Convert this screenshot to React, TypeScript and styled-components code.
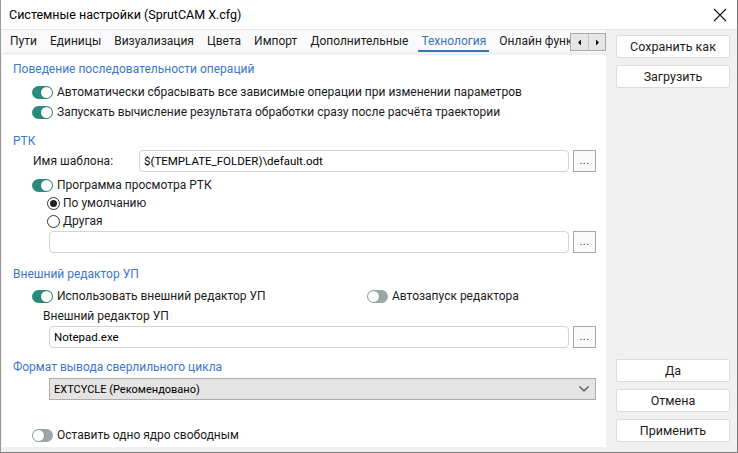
import React from "react";
import styled, { createGlobalStyle } from "styled-components";

const Global = createGlobalStyle`
  html, body { margin: 0; padding: 0; background: #ffffff; }
  body { font-family: Roboto, "Noto Sans", "Liberation Sans", sans-serif; font-size: 12px; color: #1b1b1b; }
  * { box-sizing: border-box; }
`;

const Window = styled.div`
  width: 738px;
  height: 453px;
  border-right: 1px solid #7c7c7c;
  border-bottom: 1px solid #7c7c7c;
  border-left: 1px solid #9a9a9a;
  display: flex;
  flex-direction: column;
  background: #f0f0f0;
  overflow: hidden;
`;

const TitleBar = styled.div`
  height: 30px;
  background: #ffffff;
  display: flex;
  align-items: center;
  justify-content: space-between;
  padding: 0 10px 0 8px;
  border-bottom: 1px solid #e6e6e6;
  font-size: 12.5px;
  color: #000;
`;

const CloseIcon = styled.svg`
  width: 14px;
  height: 14px;
`;

const Body = styled.div`
  flex: 1;
  display: flex;
`;

const LeftCol = styled.div`
  width: 605px;
  display: flex;
  flex-direction: column;
  padding-bottom: 5px;
`;

const TabStrip = styled.div`
  height: 22px;
  background: #fafafa;
  display: flex;
  align-items: stretch;
  overflow: hidden;
`;

const Tabs = styled.div`
  display: flex;
  width: 571px;
  overflow: hidden;
  padding-left: 6px;
`;

const Tab = styled.div<{ $active?: boolean }>`
  flex: none;
  padding: 2px 3px 0;
  margin-right: 7px;
  display: flex;
  align-items: center;
  white-space: nowrap;
  color: ${(p) => (p.$active ? "#3a73b8" : "#1b1b1b")};
  border-bottom: 2px solid ${(p) => (p.$active ? "#3a73b8" : "transparent")};
`;

const ScrollBtns = styled.div`
  display: flex;
  align-items: center;
  height: 18px;
  margin-top: 3px;
  border: 1px solid #a8a8a8;
  background: #e6e6e6;
`;

const ScrollBtn = styled.div<{ $left?: boolean }>`
  width: 17px;
  height: 16px;
  display: flex;
  align-items: center;
  justify-content: center;
  border-left: ${(p) => (p.$left ? "none" : "1px solid #c4c4c4")};
`;

const Panel = styled.div`
  margin-top: 3px;
  margin-left: 1px;
  flex: 1;
  background: #ffffff;
  display: flex;
  flex-direction: column;
  padding: 5px 10px 0 0;
`;

const Header = styled.div<{ $mt?: number }>`
  height: 18px;
  margin-top: ${(p) => p.$mt ?? 0}px;
  padding-left: 11px;
  display: flex;
  align-items: center;
  color: #3b78c8;
  white-space: nowrap;
`;

const Row = styled.div<{ $mt?: number; $indent: number; $h?: number }>`
  height: ${(p) => p.$h ?? 20}px;
  margin-top: ${(p) => p.$mt ?? 0}px;
  padding-left: ${(p) => p.$indent}px;
  display: flex;
  align-items: center;
  white-space: nowrap;
`;

const Track = styled.span<{ $on: boolean }>`
  flex: none;
  width: 21px;
  height: 13px;
  border-radius: 7px;
  background: ${(p) => (p.$on ? "#2b8a7c" : "#97a8a6")};
  position: relative;
  margin-right: 4px;
`;

const Knob = styled.span<{ $on: boolean }>`
  position: absolute;
  top: 1px;
  left: ${(p) => (p.$on ? "9px" : "1px")};
  width: 11px;
  height: 11px;
  border-radius: 50%;
  background: #ffffff;
  box-shadow: 0 0 0 0.5px rgba(0, 0, 0, 0.15);
`;

const Radio = styled.span<{ $on: boolean }>`
  flex: none;
  width: 13px;
  height: 13px;
  border-radius: 50%;
  border: 1px solid #333;
  background: #fff;
  display: flex;
  align-items: center;
  justify-content: center;
  margin-right: 3px;
  &::after {
    content: "";
    width: 7px;
    height: 7px;
    border-radius: 50%;
    background: ${(p) => (p.$on ? "#222" : "transparent")};
  }
`;

const Label = styled.span<{ $w?: number }>`
  flex: none;
  width: ${(p) => (p.$w ? `${p.$w}px` : "auto")};
`;

const Input = styled.div`
  flex: 1;
  height: 22px;
  border: 1px solid #d4d4d4;
  border-radius: 4px;
  background: #fff;
  display: flex;
  align-items: center;
  padding-left: 4px;
  font-size: 11.5px;
  color: #000;
`;

const DotsBtn = styled.div`
  flex: none;
  width: 23px;
  height: 22px;
  margin-left: 4px;
  border: 1px solid #a8a8a8;
  background: #fafafa;
  display: flex;
  align-items: center;
  justify-content: center;
  color: #2a2a8a;
  font-size: 11px;
  padding-bottom: 2px;
  letter-spacing: 0.5px;
`;

const Select = styled.div`
  flex: 1;
  height: 22px;
  border: 1px solid #adadad;
  background: #e4e4e4;
  display: flex;
  align-items: center;
  justify-content: space-between;
  padding: 0 6px 0 4px;
  font-size: 11px;
  color: #000;
`;

const Spacer = styled.div<{ $h: number }>`
  flex: none;
  height: ${(p) => p.$h}px;
`;

const RightCol = styled.div`
  flex: 1;
  display: flex;
  flex-direction: column;
  padding: 5px 7px 10px 10px;
  gap: 7px;
`;

const Btn = styled.div`
  height: 23px;
  border: 1px solid #dcdcdc;
  border-radius: 2px;
  background: #fff;
  display: flex;
  align-items: center;
  justify-content: center;
  color: #1b1b1b;
  font-size: 12.5px;
`;

const Fill = styled.div`
  flex: 1;
`;

const Toggle = ({ on }: { on: boolean }) => (
  <Track $on={on}>
    <Knob $on={on} />
  </Track>
);

const tabs = ["Пути", "Единицы", "Визуализация", "Цвета", "Импорт", "Дополнительные", "Технология", "Онлайн функции"];

export default function App() {
  return (
    <>
      <Global />
      <Window>
        <TitleBar>
          <span>Системные настройки (SprutCAM X.cfg)</span>
          <CloseIcon viewBox="0 0 14 14">
            <path d="M1 1 L13 13 M13 1 L1 13" stroke="#111" strokeWidth="1.1" fill="none" />
          </CloseIcon>
        </TitleBar>
        <Body>
          <LeftCol>
            <TabStrip>
              <Tabs>
                {tabs.map((t) => (
                  <Tab key={t} $active={t === "Технология"}>
                    {t}
                  </Tab>
                ))}
              </Tabs>
              <ScrollBtns>
                <ScrollBtn $left>
                  <svg width="6" height="7" viewBox="0 0 6 7">
                    <path d="M4 0.5 L1 3.5 L4 6.5 Z" fill="#111" />
                  </svg>
                </ScrollBtn>
                <ScrollBtn>
                  <svg width="6" height="7" viewBox="0 0 6 7">
                    <path d="M2 0.5 L5 3.5 L2 6.5 Z" fill="#111" />
                  </svg>
                </ScrollBtn>
              </ScrollBtns>
            </TabStrip>
            <Panel>
              <Header>Поведение последовательности операций</Header>
              <Row $indent={30} $mt={4}>
                <Toggle on />
                Автоматически сбрасывать все зависимые операции при изменении параметров
              </Row>
              <Row $indent={30}>
                <Toggle on />
                Запускать вычисление результата обработки сразу после расчёта траектории
              </Row>
              <Header $mt={10}>РТК</Header>
              <Row $indent={31} $h={22}>
                <Label $w={106}>Имя шаблона:</Label>
                <Input>$(TEMPLATE_FOLDER)\default.odt</Input>
                <DotsBtn>...</DotsBtn>
              </Row>
              <Row $indent={30} $mt={4} $h={18}>
                <Toggle on />
                Программа просмотра РТК
              </Row>
              <Row $indent={45} $h={18}>
                <Radio $on />
                По умолчанию
              </Row>
              <Row $indent={45} $h={18}>
                <Radio $on={false} />
                Другая
              </Row>
              <Row $indent={47} $h={22} $mt={1}>
                <Input />
                <DotsBtn>...</DotsBtn>
              </Row>
              <Header $mt={12}>Внешний редактор УП</Header>
              <Row $indent={30} $mt={3}>
                <Label $w={335}>
                  <Row $indent={0} $h={20}>
                    <Toggle on />
                    Использовать внешний редактор УП
                  </Row>
                </Label>
                <Toggle on={false} />
                Автозапуск редактора
              </Row>
              <Row $indent={41} $h={20}>
                Внешний редактор УП
              </Row>
              <Row $indent={47} $h={22}>
                <Input>Notepad.exe</Input>
                <DotsBtn>...</DotsBtn>
              </Row>
              <Header $mt={10}>Формат вывода сверлильного цикла</Header>
              <Row $indent={47} $h={22} $mt={2}>
                <Select>
                  <span>EXTCYCLE (Рекомендовано)</span>
                  <svg width="10" height="6" viewBox="0 0 10 6">
                    <path d="M0.5 0.5 L5 5 L9.5 0.5" stroke="#444" strokeWidth="1.1" fill="none" />
                  </svg>
                </Select>
              </Row>
              <Spacer $h={25} />
              <Row $indent={30}>
                <Toggle on={false} />
                Оставить одно ядро свободным
              </Row>
            </Panel>
          </LeftCol>
          <RightCol>
            <Btn>Сохранить как</Btn>
            <Btn>Загрузить</Btn>
            <Fill />
            <Btn>Да</Btn>
            <Btn>Отмена</Btn>
            <Btn>Применить</Btn>
          </RightCol>
        </Body>
      </Window>
    </>
  );
}
